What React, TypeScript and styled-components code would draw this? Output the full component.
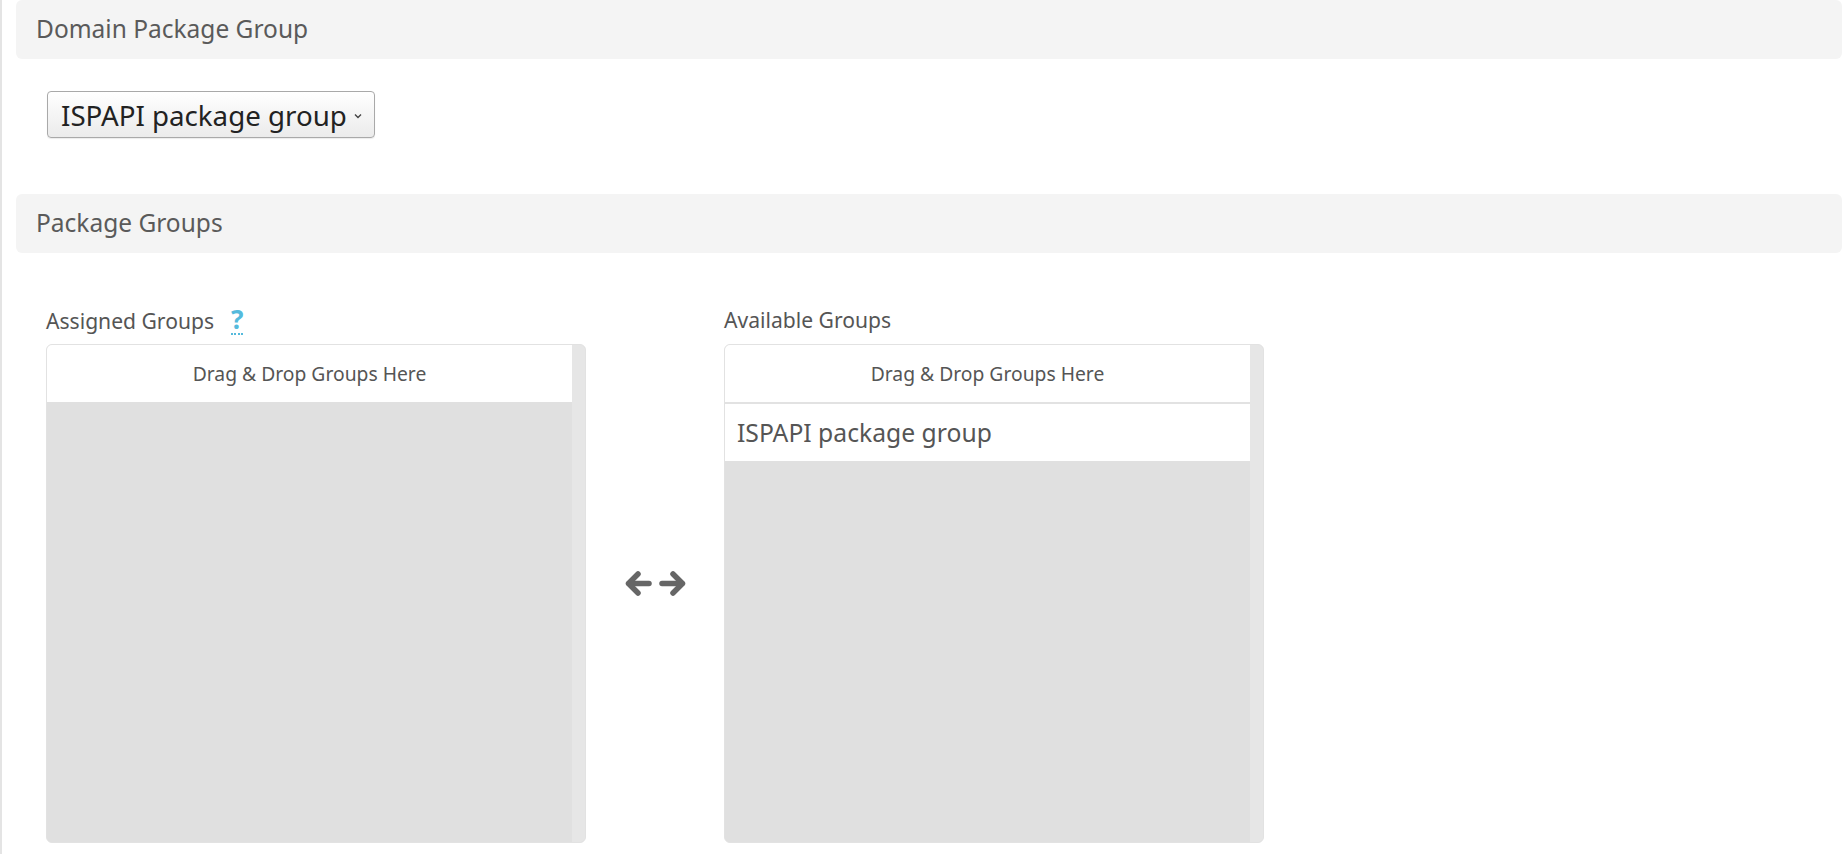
import React from "react";
import styled, { createGlobalStyle } from "styled-components";

const GlobalStyle = createGlobalStyle`
  html, body { margin: 0; padding: 0; background: #ffffff; }
  body { font-family: "Noto Sans", "Open Sans", sans-serif; color: #555; }
  * { box-sizing: border-box; }
`;

const Page = styled.div`
  min-height: 854px;
  border-left: 2px solid #e4e4e4;
  padding: 0 2px 0 14px;
`;

const SectionHeading = styled.div`
  height: 59px;
  background: #f4f4f4;
  border-radius: 6px;
  padding: 0 20px;
  display: flex;
  align-items: center;
  font-size: 24.5px;
  color: #5a5a5a;
  line-height: 1;
`;

const SelectRow = styled.div`
  padding: 32px 0 56px 31px;
`;

const SelectBox = styled.div`
  width: 328px;
  height: 47px;
  border: 1px solid #a9a9a9;
  border-radius: 4px;
  background: linear-gradient(#ffffff, #ebebeb);
  display: flex;
  align-items: center;
  justify-content: space-between;
  padding: 0 11px 0 13px;
  font-size: 27.7px;
  color: #222;
  box-shadow: 0 1px 1px rgba(0, 0, 0, 0.08);
`;

const Chevron = styled.svg`
  width: 10px;
  height: 8px;
  margin-top: 2px;
`;

const Columns = styled.div`
  display: flex;
  align-items: flex-start;
  padding: 53px 0 0 30px;
`;

const Column = styled.div`
  width: 540px;
  display: flex;
  flex-direction: column;
`;

const Label = styled.div`
  font-size: 21.1px;
  line-height: 28px;
  color: #555;
  height: 38px;
  display: flex;
  align-items: baseline;
  gap: 17px;
`;

const Help = styled.span`
  color: #55badc;
  font-weight: 700;
  font-size: 26px;
  line-height: 1;
  padding-bottom: 1px;
  border-bottom: 2px dotted #55badc;
`;

const Box = styled.div`
  height: 499px;
  border: 1px solid #e2e2e2;
  border-radius: 6px;
  background: #e0e0e0;
  display: flex;
  overflow: hidden;
`;

const List = styled.div`
  flex: 1;
  display: flex;
  flex-direction: column;
`;

const Scrollbar = styled.div`
  width: 13px;
  background: #e6e6e6;
`;

const BoxHeader = styled.div`
  height: 57px;
  background: #fff;
  display: flex;
  align-items: center;
  justify-content: center;
  font-size: 19.3px;
  color: #555;
`;

const Item = styled.div`
  height: 59px;
  background: #fff;
  border-top: 2px solid #e2e2e2;
  display: flex;
  align-items: center;
  padding-left: 12px;
  font-size: 24.7px;
  color: #555;
`;

const Swap = styled.div`
  width: 138px;
  align-self: stretch;
  display: flex;
  align-items: center;
  justify-content: center;
  padding-top: 18px;
  gap: 7px;
`;

const ArrowIcon = ({ dir }: { dir: "left" | "right" }) => (
  <svg width="27" height="27" viewBox="0 0 27 27">
    <g
      fill="none"
      stroke="#666"
      strokeWidth="5.5"
      strokeLinecap="round"
      strokeLinejoin="round"
      transform={dir === "right" ? "translate(27 0) scale(-1 1)" : undefined}
    >
      <path d="M4 13.5 H24" />
      <path d="M13 4 L3.5 13.5 L13 23" />
    </g>
  </svg>
);

export default function App() {
  return (
    <>
      <GlobalStyle />
      <Page>
        <SectionHeading>Domain Package Group</SectionHeading>
        <SelectRow>
          <SelectBox>
            <span>ISPAPI package group</span>
            <Chevron viewBox="0 0 10 8">
              <path d="M2 2.5 L5 5.5 L8 2.5" fill="none" stroke="#444" strokeWidth="1.4" />
            </Chevron>
          </SelectBox>
        </SelectRow>
        <SectionHeading>Package Groups</SectionHeading>
        <Columns>
          <Column>
            <Label>
              <span>Assigned Groups</span>
              <Help>?</Help>
            </Label>
            <Box>
              <List>
                <BoxHeader>Drag &amp; Drop Groups Here</BoxHeader>
              </List>
              <Scrollbar />
            </Box>
          </Column>
          <Swap>
            <ArrowIcon dir="left" />
            <ArrowIcon dir="right" />
          </Swap>
          <Column>
            <Label>
              <span>Available Groups</span>
            </Label>
            <Box>
              <List>
                <BoxHeader>Drag &amp; Drop Groups Here</BoxHeader>
                <Item>ISPAPI package group</Item>
              </List>
              <Scrollbar />
            </Box>
          </Column>
        </Columns>
      </Page>
    </>
  );
}
